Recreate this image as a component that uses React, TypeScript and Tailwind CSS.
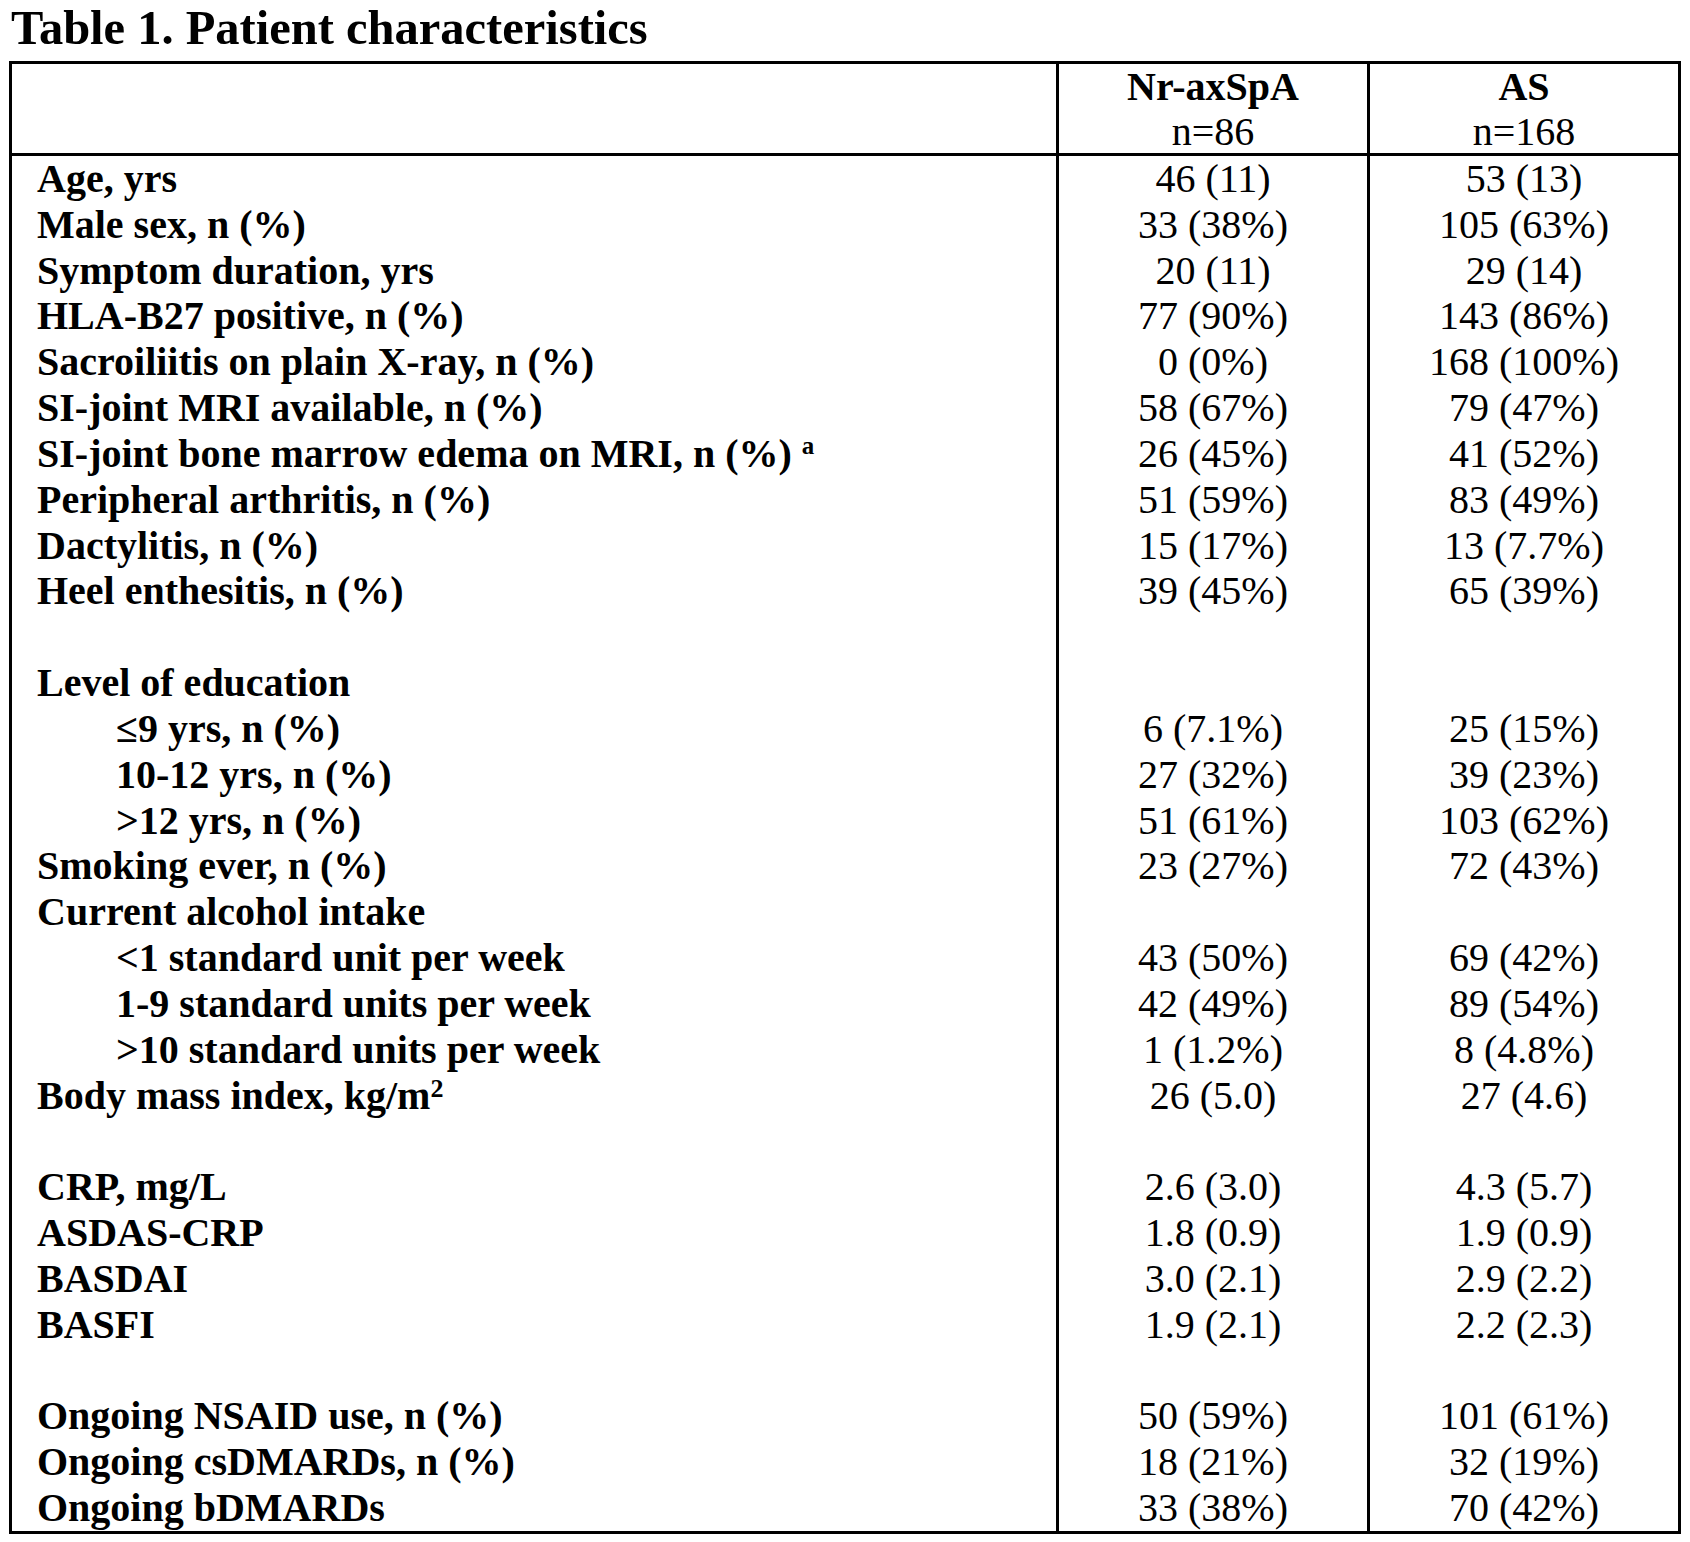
const serif = { fontFamily: '"Liberation Serif", "Times New Roman", serif' };

type Row = { label?: React.ReactNode; a?: string; b?: string; indent?: boolean };

const rows: Row[] = [
  { label: 'Age, yrs', a: '46 (11)', b: '53 (13)' },
  { label: 'Male sex, n (%)', a: '33 (38%)', b: '105 (63%)' },
  { label: 'Symptom duration, yrs', a: '20 (11)', b: '29 (14)' },
  { label: 'HLA-B27 positive, n (%)', a: '77 (90%)', b: '143 (86%)' },
  { label: 'Sacroiliitis on plain X-ray, n (%)', a: '0 (0%)', b: '168 (100%)' },
  { label: 'SI-joint MRI available, n (%)', a: '58 (67%)', b: '79 (47%)' },
  {
    label: (
      <>
        SI-joint bone marrow edema on MRI, n (%) <sup className="text-[25px] relative -top-[13px]">a</sup>
      </>
    ),
    a: '26 (45%)',
    b: '41 (52%)',
  },
  { label: 'Peripheral arthritis, n (%)', a: '51 (59%)', b: '83 (49%)' },
  { label: 'Dactylitis, n (%)', a: '15 (17%)', b: '13 (7.7%)' },
  { label: 'Heel enthesitis, n (%)', a: '39 (45%)', b: '65 (39%)' },
  {},
  { label: 'Level of education' },
  { label: '≤9 yrs, n (%)', a: '6 (7.1%)', b: '25 (15%)', indent: true },
  { label: '10-12 yrs, n (%)', a: '27 (32%)', b: '39 (23%)', indent: true },
  { label: '>12 yrs, n (%)', a: '51 (61%)', b: '103 (62%)', indent: true },
  { label: 'Smoking ever, n (%)', a: '23 (27%)', b: '72 (43%)' },
  { label: 'Current alcohol intake' },
  { label: '<1 standard unit per week', a: '43 (50%)', b: '69 (42%)', indent: true },
  { label: '1-9 standard units per week', a: '42 (49%)', b: '89 (54%)', indent: true },
  { label: '>10 standard units per week', a: '1 (1.2%)', b: '8 (4.8%)', indent: true },
  {
    label: (
      <>
        Body mass index, kg/m<sup className="text-[26px] relative -top-[12px]">2</sup>
      </>
    ),
    a: '26 (5.0)',
    b: '27 (4.6)',
  },
  {},
  { label: 'CRP, mg/L', a: '2.6 (3.0)', b: '4.3 (5.7)' },
  { label: 'ASDAS-CRP', a: '1.8 (0.9)', b: '1.9 (0.9)' },
  { label: 'BASDAI', a: '3.0 (2.1)', b: '2.9 (2.2)' },
  { label: 'BASFI', a: '1.9 (2.1)', b: '2.2 (2.3)' },
  {},
  { label: 'Ongoing NSAID use, n (%)', a: '50 (59%)', b: '101 (61%)' },
  { label: 'Ongoing csDMARDs, n (%)', a: '18 (21%)', b: '32 (19%)' },
  { label: 'Ongoing bDMARDs', a: '33 (38%)', b: '70 (42%)' },
];

export default function App() {
  return (
    <div className="bg-white text-black w-[1690px] min-h-[1542px]" style={serif}>
      <h1 className="text-[48.5px] font-bold leading-[50px] pt-[3px] pl-[11px] mb-[8px] whitespace-nowrap">
        Table 1. Patient characteristics
      </h1>

      <div className="ml-[9px] w-[1672px] border-[3px] border-black">
        {/* header */}
        <div className="flex border-b-[3px] border-black h-[92px] text-[40px] leading-[45px]">
          <div className="w-[1044px]" />
          <div className="w-[311px] border-l-[3px] border-black text-center">
            <div className="font-bold">Nr-axSpA</div>
            <div>n=86</div>
          </div>
          <div className="w-[311px] border-l-[3px] border-black text-center">
            <div className="font-bold">AS</div>
            <div>n=168</div>
          </div>
        </div>

        {/* body */}
        {rows.map((r, i) => (
          <div key={i} className="flex h-[45.83px] text-[40px] leading-[45.83px]">
            <div
              className={
                'w-[1044px] font-bold whitespace-nowrap ' + (r.indent ? 'pl-[104px]' : 'pl-[25px]')
              }
            >
              {r.label}
            </div>
            <div className="w-[311px] border-l-[3px] border-black text-center whitespace-nowrap">{r.a}</div>
            <div className="w-[311px] border-l-[3px] border-black text-center whitespace-nowrap">{r.b}</div>
          </div>
        ))}
      </div>
    </div>
  );
}
